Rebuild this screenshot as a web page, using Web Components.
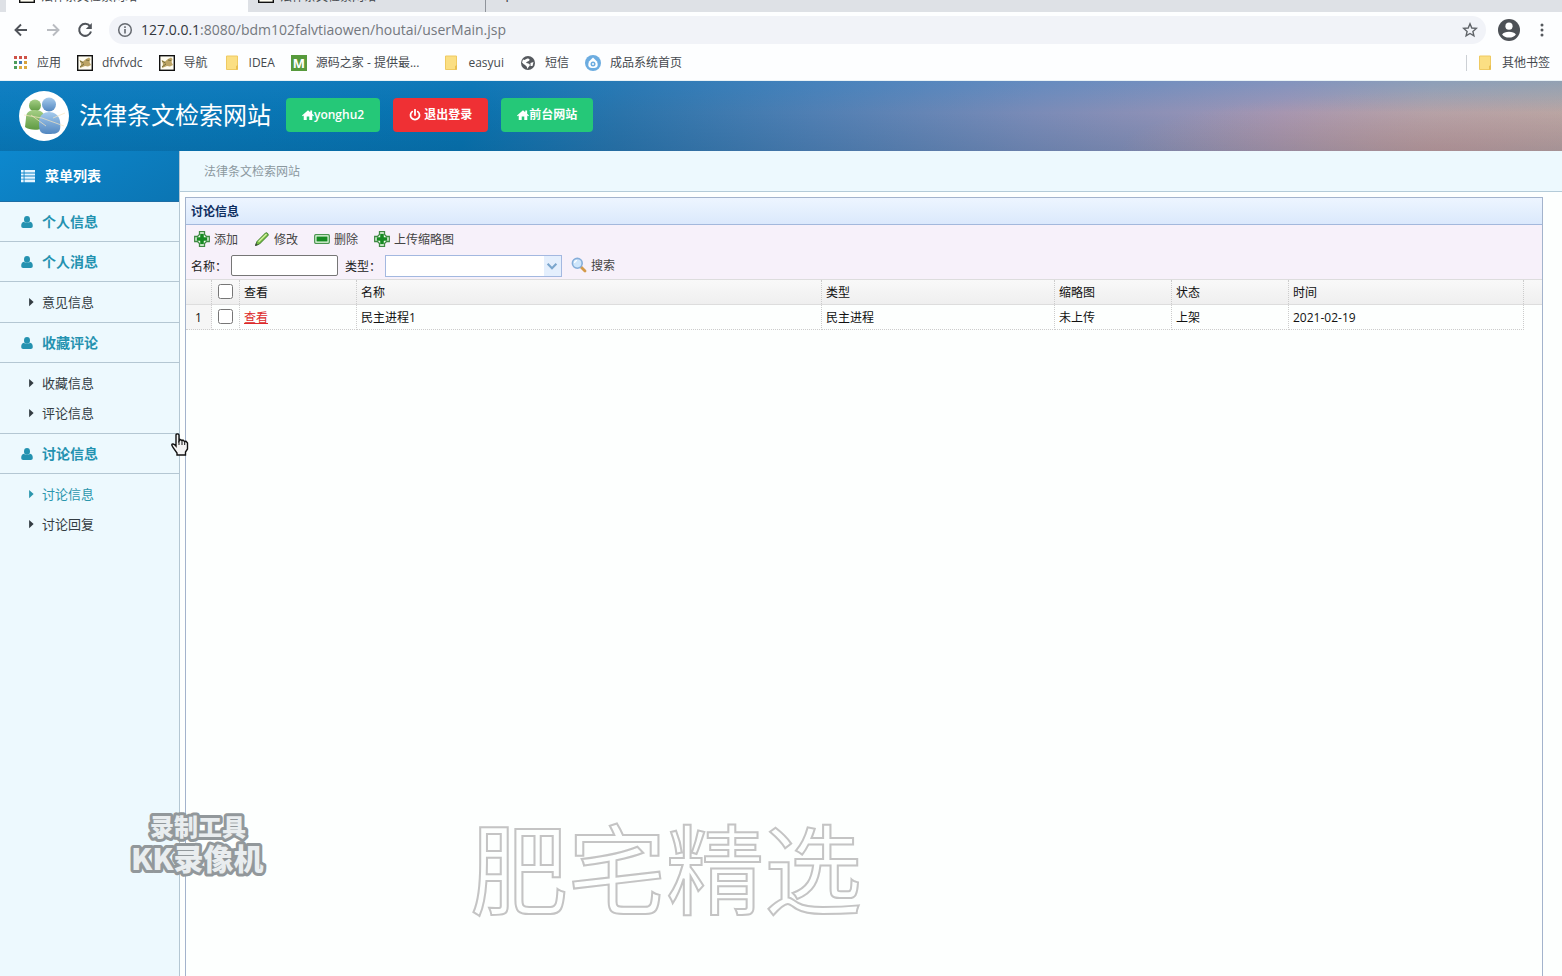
<!DOCTYPE html>
<html lang="zh-CN">
<head>
<meta charset="utf-8">
<title>法律条文检索网站</title>
<style>
html, body { margin: 0; height: 100%; }
body { font: 12px/16px "Open Sans", "Noto Sans CJK SC", sans-serif; color: #222; background: #fdfffe; overflow: hidden; }
</style>
</head>
<body>
<app-window></app-window>
<script>
const ICONS = {
  back: '<path d="M14 8H3M8 2.500L2.500 8L8 13.500" fill="none" stroke="#50545a" stroke-width="1.900"/>',
  forward: '<path d="M2 8H13M8 2.500L13.500 8L8 13.500" fill="none" stroke="#b9bcc1" stroke-width="1.900"/>',
  reload: '<path d="M13 4.200A6 6 0 1 0 14 9.500" fill="none" stroke="#50545a" stroke-width="2"/><path d="M14.800 1V7H8.800Z" fill="#50545a"/>',
  info: '<circle cx="8" cy="8" r="6.300" fill="none" stroke="#666a70" stroke-width="1.500"/><path d="M8 7V11.500M8 4.300V6" stroke="#666a70" stroke-width="1.600"/>',
  star: '<path d="M8 1.800L9.800 6L14.300 6.400L10.900 9.400L11.900 13.900L8 11.500L4.100 13.900L5.100 9.400L1.700 6.400L6.200 6Z" fill="none" stroke="#5f6368" stroke-width="1.400"/>',
  account: '<circle cx="8" cy="8" r="8" fill="#4d5156"/><circle cx="8" cy="5.200" r="2.600" fill="#fff"/><path d="M3 11.200C4.500 8.700 11.500 8.700 13 11.200C11.500 14.200 4.500 14.200 3 11.200Z" fill="#fff"/>',
  more: '<g fill="#55595e"><circle cx="8" cy="3" r="1.500"/><circle cx="8" cy="8" r="1.500"/><circle cx="8" cy="13" r="1.500"/></g>',
  apps: '<g fill="#cf5248"><path d="M2 1h3v3H2zM7 1h3v3H7zM12 1h3v3h-3z"/></g><path d="M2 6h3v3H2z" fill="#4c9c5c"/><path d="M7 6h3v3H7z" fill="#4679b8"/><path d="M12 6h3v3h-3z" fill="#d9a23b"/><path d="M2 11h3v3H2z" fill="#4c9c5c"/><g fill="#dbaa42"><path d="M7 11h3v3H7zM12 11h3v3h-3z"/></g>',
  tomcat: '<rect x=".7" y=".7" width="14.600" height="14.600" fill="#fffdf2" stroke="#111" stroke-width="1.400"/><path d="M2.500 5L6 6.500L9 4L12 2.500L13.500 4L12.500 7L14 10L11 11.500L8 11L3 13L4 9Z" fill="#bda566"/><path d="M3 12L7 9M9 5L12 5.500M3 6L6.500 8" stroke="#77703c" fill="none"/>',
  folder: '<path d="M2.500 1H13.500V14.500H2.500Z" fill="#fbdf83" stroke="#efca62"/><path d="M12 14.500V11L14 10V14.500Z" fill="#e9bf50"/>',
  globe: '<circle cx="8" cy="8" r="7" fill="#55595e"/><path d="M3 4.500C6 6 6 2.500 9 4C11 5.500 8 6 6 7.500C7 9 10 7.500 9.800 10.500L7 14C8 11 4 10 2 7.500ZM10.500 8L13.500 7L12.500 11L10.500 11Z" fill="#fff"/>',
  site: '<circle cx="8" cy="8" r="8" fill="#6cace0"/><path d="M8 2.500L12 6.500C14 12 11.500 13 8 13S2 12 4 6.500Z" fill="#fff"/><circle cx="8" cy="9" r="2.500" fill="#6cace0"/><circle cx="8" cy="9" r="1" fill="#fff"/>',
  home: '<path d="M0 8.500L8 1.500L11 4.200V2H13.500V6.300L16 8.500L15 9.800L13.700 8.700V14.500H9.700V10H6.300V14.500H2.300V8.700L1 9.800Z" fill="#fff"/>',
  power: '<path d="M4.300 3.500A6 6 0 1 0 11.700 3.500" fill="none" stroke="#fff" stroke-width="2.400" stroke-linecap="round"/><path d="M8 1V8" stroke="#fff" stroke-width="2.400" stroke-linecap="round"/>',
  list: '<path d="M0 1h3v3H0zM4 1h12v3H4zM0 5h3v2.500H0zM4 5h12v2.500H4zM0 8.500h3v2.500H0zM4 8.500h12v2.500H4zM0 12h3v3H0zM4 12h12v3H4z" fill="#e5f5ff"/>',
  user: '<ellipse cx="8" cy="4.500" rx="4" ry="4.500" fill="#2492b0"/><path d="M4 7.500C1 8 .3 10.500 .3 13C.3 15 1.300 16 3 16H13C14.700 16 15.700 15 15.700 13C15.700 10.500 15 8 12 7.500C10 9.700 6 9.700 4 7.500Z" fill="#2492b0"/>',
  caret: '<path d="M5.500 2.500L11.500 8L5.500 13.500Z" fill="currentColor"/>',
  add: '<path d="M5.500 .7H10.500V3.500L12.500 5.500H15.300V10.500H12.500L10.500 12.500V15.300H5.500V12.500L3.500 10.500H.7V5.500H3.500L5.500 3.500Z" fill="#f4fff1" stroke="#3f8a43" stroke-width="1.300"/><path d="M6.200 2.700H9.800V6.200H13.300V9.800H9.800V13.300H6.200V9.800H2.700V6.200H6.200Z" fill="#168a22"/>',
  edit: '<path d="M1.500 14.500L3 10.500L11.500 2C12.500 1 15 3 14 4.500L5.500 13Z" fill="#7cbf45" stroke="#397d2b"/><path d="M4.500 10.800L12.500 3" stroke="#d7f2a4" stroke-width="1.300"/><path d="M1 15L2 12L4 14Z" fill="#444"/>',
  remove: '<rect x=".7" y="3.700" width="14.600" height="8.600" rx="1" fill="#edffe9" stroke="#4b9550" stroke-width="1.300"/><path d="M2.500 5.500H13.500V10.500H2.500Z" fill="#168a22"/>',
  search: '<path d="M10 10L14 14" stroke="#d49a4a" stroke-width="2.800" stroke-linecap="round"/><circle cx="6.300" cy="6.300" r="4.900" fill="#cfe6fb" stroke="#86aed9" stroke-width="1.600"/><path d="M3.500 6A3 3 0 0 1 6 3.300" fill="none" stroke="#fff" stroke-width="1.300"/>',
  chevron: '<path d="M3 5.500L8 10.500L13 5.500" fill="none" stroke="#7ba6cd" stroke-width="2.400"/>'
};

class UiIcon extends HTMLElement {
  constructor() {
    super();
    const size = this.getAttribute('size') || 16;
    this.attachShadow({ mode: 'open' }).innerHTML = `<style>:host{display:block;flex:none;width:${size}px;height:${size}px}svg{display:block;width:100%;height:100%}</style><svg viewBox="0 0 16 16" aria-hidden="true">${ICONS[this.getAttribute('name')] || ''}</svg>`;
  }
}
customElements.define('ui-icon', UiIcon);

const define = (name, html) => {
  const template = document.createElement('template');
  template.innerHTML = html;
  customElements.define(name, class extends HTMLElement {
    constructor() {
      super();
      this.attachShadow({ mode: 'open' }).append(template.content.cloneNode(true));
    }
  });
};

define('browser-tab', `
<style>
:host{display:flex;box-sizing:border-box;flex:none;width:240px;height:25px;padding:0 12px 0 10px;gap:8px;align-items:flex-start;color:#45494e;background:#dee1e6}
:host([active]){background:#fdfeff;width:242px;border-bottom-right-radius:0;padding-left:13px}
span{flex:1;margin-left:-2px;line-height:20px}
</style><ui-icon name="tomcat"></ui-icon><span><slot></slot></span>`);

define('book-mark', `
<style>
:host{display:block;flex:none}
a{display:flex;align-items:center;gap:9px;color:#45494e;text-decoration:none;white-space:nowrap}
</style><a href="#"><slot name="icon"></slot><slot></slot></a>`);

define('browser-chrome', `
<style>
:host{display:block;background:#fdfeff}
.tabs{height:12px;padding-left:6px;display:flex;align-items:flex-end;overflow:hidden;background:#dee1e6}
.tabs .new{height:25px;padding-left:16px;margin-left:-3px;border-left:1px solid #8f949b;color:#45494e;font-size:18px;line-height:20px}
.bar{height:36px;display:flex;align-items:center;gap:16px;padding:0 12px 0 13px}
.nav{border:0;background:none;padding:0;display:block}
.url{flex:1;display:flex;align-items:center;gap:8px;height:28px;border-radius:14px;background:#f1f3f8;padding:0 8px}
.address{flex:1;font-size:14px;line-height:20px;color:#74787e}.address b{font-weight:400;color:#33373c}
.marks{height:30px;display:flex;align-items:center;gap:16px;padding:0 12px 2px;border-bottom:1px solid #e9f2f6}
.m{width:16px;height:16px;background:#579a3c;color:#fff;font-weight:700;font-size:13px;text-align:center}
.other{margin-left:auto;border-left:1px solid #ccd0d5;padding-left:10px}
.wide{margin-right:8px}
.end{gap:14px;display:flex;align-items:center;margin-left:-4px}
</style>
<div class="tabs"><browser-tab active>法律条文检索网站</browser-tab><browser-tab>法律条文检索网站</browser-tab><span class="new">+</span></div>
<div class="bar">
<button class="nav" aria-label="后退"><ui-icon name="back"></ui-icon></button>
<button class="nav" aria-label="前进"><ui-icon name="forward"></ui-icon></button>
<button class="nav" aria-label="刷新"><ui-icon name="reload"></ui-icon></button>
<div class="url"><ui-icon name="info"></ui-icon><span class="address"><b>127.0.0.1</b>:8080/bdm102falvtiaowen/houtai/userMain.jsp</span><ui-icon name="star"></ui-icon></div>
<div class="end"><ui-icon name="account" size="22"></ui-icon><ui-icon name="more"></ui-icon></div>
</div>
<nav class="marks">
<book-mark><ui-icon slot="icon" name="apps"></ui-icon>应用</book-mark>
<book-mark><ui-icon slot="icon" name="tomcat"></ui-icon>dfvfvdc</book-mark>
<book-mark><ui-icon slot="icon" name="tomcat"></ui-icon>导航</book-mark>
<book-mark><ui-icon slot="icon" name="folder"></ui-icon>IDEA</book-mark>
<book-mark class="wide"><span slot="icon" class="m">M</span>源码之家 - 提供最...</book-mark>
<book-mark><ui-icon slot="icon" name="folder"></ui-icon>easyui</book-mark>
<book-mark><ui-icon slot="icon" name="globe"></ui-icon>短信</book-mark>
<book-mark><ui-icon slot="icon" name="site"></ui-icon>成品系统首页</book-mark>
<book-mark class="other"><ui-icon slot="icon" name="folder"></ui-icon>其他书签</book-mark>
</nav>`);

define('header-button', `
<style>
:host{display:block;flex:none}
button{display:flex;align-items:center;height:34px;padding:0 16px;border:0;border-radius:4px;background:#25c878;color:#fff;font:600 12px/16px "Open Sans","Noto Sans CJK SC",sans-serif}
:host([danger]) button{background:#ef3034}
:host([danger]) ::slotted(ui-icon){margin-right:3px}
</style><button type="button"><slot name="icon"></slot><slot></slot></button>`);

define('site-header', `
<style>
:host{display:flex;align-items:center;height:70px;padding-left:19px;background:linear-gradient(180deg,rgba(40,140,215,.25),rgba(0,0,0,0) 45%,rgba(0,60,100,.14)),radial-gradient(ellipse 320px 60px at 92% 100%,rgba(205,150,145,.7),rgba(205,150,145,0)),linear-gradient(100deg,#0a7bbc 0%,#0872ae 30%,#2b74ab 40%,#507fb3 52%,#7a8bb7 66%,#a196b5 82%,#aea5ae 91%,#b6a8a6 100%)}
svg{width:50px;height:50px;flex:none}
h1{margin:0 15px 2px 10px;font-size:24px;line-height:36px;font-weight:400;color:#fff;white-space:nowrap}
.actions{display:flex;gap:13px;margin-bottom:2px}
</style>
<svg viewBox="0 0 50 50" aria-hidden="true">
<defs><linearGradient id="g" x2="0" y2="1"><stop stop-color="#a5cf85"/><stop offset="1" stop-color="#5f9a42"/></linearGradient><linearGradient id="b" x2="0" y2="1"><stop stop-color="#a6cbed"/><stop offset="1" stop-color="#5287c0"/></linearGradient></defs>
<circle cx="25" cy="25" r="25" fill="#fff"/>
<circle cx="16" cy="14.500" r="6" fill="url(#g)"/><path d="M7 27C7 20 12 19 16 19C22 19 26 22 26 28L25 37C18 40 10 39 6 36Z" fill="url(#g)"/>
<circle cx="30" cy="13.500" r="7" fill="url(#b)"/><path d="M20 30C21 18 39 18 41 30C42 40 41 43 30 43C21 43 20 41 20 30Z" fill="url(#b)"/>
<path d="M5 24L23 27L45 35M34 27L46 22M12 24L27 35" stroke="#f5e6c0" fill="none" opacity=".7"/></svg>
<h1>法律条文检索网站</h1>
<div class="actions">
<header-button><ui-icon slot="icon" name="home" size="12"></ui-icon>yonghu2</header-button>
<header-button danger><ui-icon slot="icon" name="power" size="12"></ui-icon>退出登录</header-button>
<header-button><ui-icon slot="icon" name="home" size="12"></ui-icon>前台网站</header-button>
</div>`);

define('menu-group', `
<style>
:host{display:block}
h3{box-sizing:border-box;display:flex;align-items:center;gap:9px;height:40px;margin:0;padding-left:21px;border-bottom:1px solid #b4c7d3;font-size:14px;line-height:20px;font-weight:600;color:#2492b0}
.sub{padding:5px 0;border-bottom:1px solid #b4c7d3}
:host([leaf]) .sub{display:none}
:host([last]) .sub{border:0}
</style><h3><ui-icon name="user" size="12"></ui-icon><slot name="title"></slot></h3><div class="sub"><slot></slot></div>`);

define('menu-link', `
<style>
:host{display:block;color:#333c42}
:host([current]){color:#2b96ad}
a{display:flex;align-items:center;gap:5px;height:30px;padding-left:25px;color:inherit;font-size:13px;line-height:20px;text-decoration:none}
</style><a href="#"><ui-icon name="caret" size="12"></ui-icon><slot></slot></a>`);

define('side-menu', `
<style>
:host{display:block;box-sizing:border-box;flex:none;width:180px;background:#edf9fe;border-right:1px solid #b4c7d3}
h2{display:flex;align-items:center;gap:10px;height:50px;margin:0;padding-left:21px;border-bottom:1px solid #1d6ea5;background:linear-gradient(150deg,#0d88ce,#0b75b3);color:#fff;font-size:14px;line-height:20px;font-weight:700}
</style>
<h2><ui-icon name="list" size="14"></ui-icon>菜单列表</h2>
<menu-group leaf><span slot="title">个人信息</span></menu-group>
<menu-group><span slot="title">个人消息</span><menu-link>意见信息</menu-link></menu-group>
<menu-group><span slot="title">收藏评论</span><menu-link>收藏信息</menu-link><menu-link>评论信息</menu-link></menu-group>
<menu-group last><span slot="title">讨论信息</span><menu-link current>讨论信息</menu-link><menu-link>讨论回复</menu-link></menu-group>`);

define('tool-button', `
<style>
:host{display:block}
button{display:flex;align-items:center;gap:4px;height:24px;border:0;padding:0;background:none;color:#444;font:12px/18px "Open Sans","Noto Sans CJK SC",sans-serif}
.text{padding-top:2px}
</style><button type="button"><slot name="icon"></slot><span class="text"><slot></slot></span></button>`);

define('panel-toolbar', `
<style>
:host{display:block;height:54px;box-sizing:border-box;padding:2px 8px 0;background:#f7f1fa}
.tools{display:flex;gap:16px}
form{display:flex;align-items:center;height:28px;margin:0 0 0 -3px;color:#222}
label{flex:none;width:40px;padding-top:2px}
label span{font-family:"Noto Sans CJK TC",sans-serif}
input{box-sizing:border-box;width:107px;height:21px;border:1px solid #767676;border-radius:2px;background:#fff;margin:0 7px 0 0;padding:1px 2px}
.combo{position:relative;width:177px;height:22px;margin:1px 9px 0 0}
select{appearance:none;box-sizing:border-box;display:block;width:100%;height:100%;border:1px solid #a3b8e0;background:linear-gradient(90deg,#fff 158px,#e4effd 158px);border-radius:0;padding:0 20px 0 4px;font:inherit}
.combo ui-icon{position:absolute;right:3px;top:4px;pointer-events:none}
</style>
<div class="tools">
<tool-button><ui-icon slot="icon" name="add"></ui-icon>添加</tool-button>
<tool-button><ui-icon slot="icon" name="edit"></ui-icon>修改</tool-button>
<tool-button><ui-icon slot="icon" name="remove"></ui-icon>删除</tool-button>
<tool-button><ui-icon slot="icon" name="add"></ui-icon>上传缩略图</tool-button>
</div>
<form><label for="name">名称<span>：</span></label><input id="name" type="text"><label for="type">类型<span>：</span></label>
<div class="combo"><select id="type"><option></option><option>民主进程</option></select><ui-icon name="chevron" size="14"></ui-icon></div>
<tool-button><ui-icon slot="icon" name="search"></ui-icon>搜索</tool-button></form>`);

define('data-grid', `
<style>
:host{display:block}
table,thead,tbody{display:block}
tr{display:grid;grid-template-columns:26px 28px 117fr 465fr 233fr 117fr 117fr 235fr;padding-right:18px}
thead tr{background:linear-gradient(#f9f9f9,#efefef);border:solid #ddd;border-width:1px 0}
th,td{box-sizing:border-box;height:24px;padding:5px 4px 3px;line-height:16px;text-align:left;font-weight:400;color:#111;border-right:1px dotted #ccc;white-space:nowrap}
td{height:25px;border-bottom:1px dotted #ccc}
tr>:first-child{text-align:center;background:#f6f6f6}
thead tr>:first-child{background:none}
tr>:nth-child(2){padding-top:4px}
input{display:block;width:15px;height:15px;margin:0 0 0 2px}
a{color:#dc2a2a}
</style>
<table>
<thead><tr><th></th><th><input type="checkbox" aria-label="全选"></th><th>查看</th><th>名称</th><th>类型</th><th>缩略图</th><th>状态</th><th>时间</th></tr></thead>
<tbody><tr><td>1</td><td><input type="checkbox" aria-label="选择"></td><td><a href="#">查看</a></td><td>民主进程1</td><td>民主进程</td><td>未上传</td><td>上架</td><td>2021-02-19</td></tr></tbody>
</table>`);

define('content-panel', `
<style>
:host{display:block;flex:1;border:1px solid #a3b3cc;border-bottom:0;background:#fdfffe}
h2{margin:0;height:26px;padding-left:5px;border-bottom:1px solid #a3b8dc;background:linear-gradient(#edf5ff,#dbe9fc);color:#0e2d5f;font-size:12px;line-height:28px;font-weight:600}
</style><h2><slot name="title"></slot></h2><slot></slot>`);

define('recorder-mark', `
<style>:host{display:block;position:absolute;left:127px;bottom:98px}svg{display:block}
text{font-family:"Noto Sans CJK SC",sans-serif;font-weight:900;fill:#e9edef;stroke:#92989b;stroke-width:6px;stroke-linejoin:round;paint-order:stroke}</style>
<svg width="142" height="68" viewBox="0 0 142 68"><text x="23" y="26" font-size="24">录制工具</text><text x="4" y="60" font-size="30">KK录像机</text></svg>`);

define('outline-mark', `
<style>:host{display:block;position:absolute;left:470px;bottom:42px;font:98px/140px "Noto Sans CJK SC",sans-serif;color:transparent;-webkit-text-stroke:2px #c4c4c4;white-space:nowrap;pointer-events:none}</style><slot></slot>`);

define('hand-pointer', `
<style>:host{display:block;position:absolute;left:171px;top:433px;pointer-events:none}svg{display:block}</style>
<svg width="18" height="24" viewBox="0 0 18 24" aria-hidden="true"><path d="M5 2C5 .5 8 .5 8 2V8L9 6.500L11 7.500L12 7L13.500 8.500L15 8.200L16.500 10V16L14.500 19V22H6V20L2 14.500L.8 12C.8 10.500 3 10.500 5 13Z" fill="#f4f4f4" stroke="#111" stroke-width="1.400"/><path d="M8 8V12M11 8V12M13.700 9V12" stroke="#111"/></svg>`);

define('app-window', `
<style>
:host{display:flex;flex-direction:column;height:100vh;position:relative;overflow:hidden}
.body{flex:1;display:flex;min-height:0}
main{flex:1;min-width:0;display:flex;flex-direction:column}
.crumb{height:40px;padding-left:24px;border-bottom:1px solid #b4cbd8;background:#edf9fe;color:#8b989e;line-height:42px}
.work{flex:1;display:flex;padding:5px 19px 0 5px}
</style>
<browser-chrome></browser-chrome>
<site-header></site-header>
<div class="body"><side-menu></side-menu>
<main><div class="crumb">法律条文检索网站</div>
<div class="work"><content-panel><span slot="title">讨论信息</span><panel-toolbar></panel-toolbar><data-grid></data-grid></content-panel></div></main></div>
<recorder-mark></recorder-mark><outline-mark>肥宅精选</outline-mark><hand-pointer></hand-pointer>`);
</script>
</body>
</html>
